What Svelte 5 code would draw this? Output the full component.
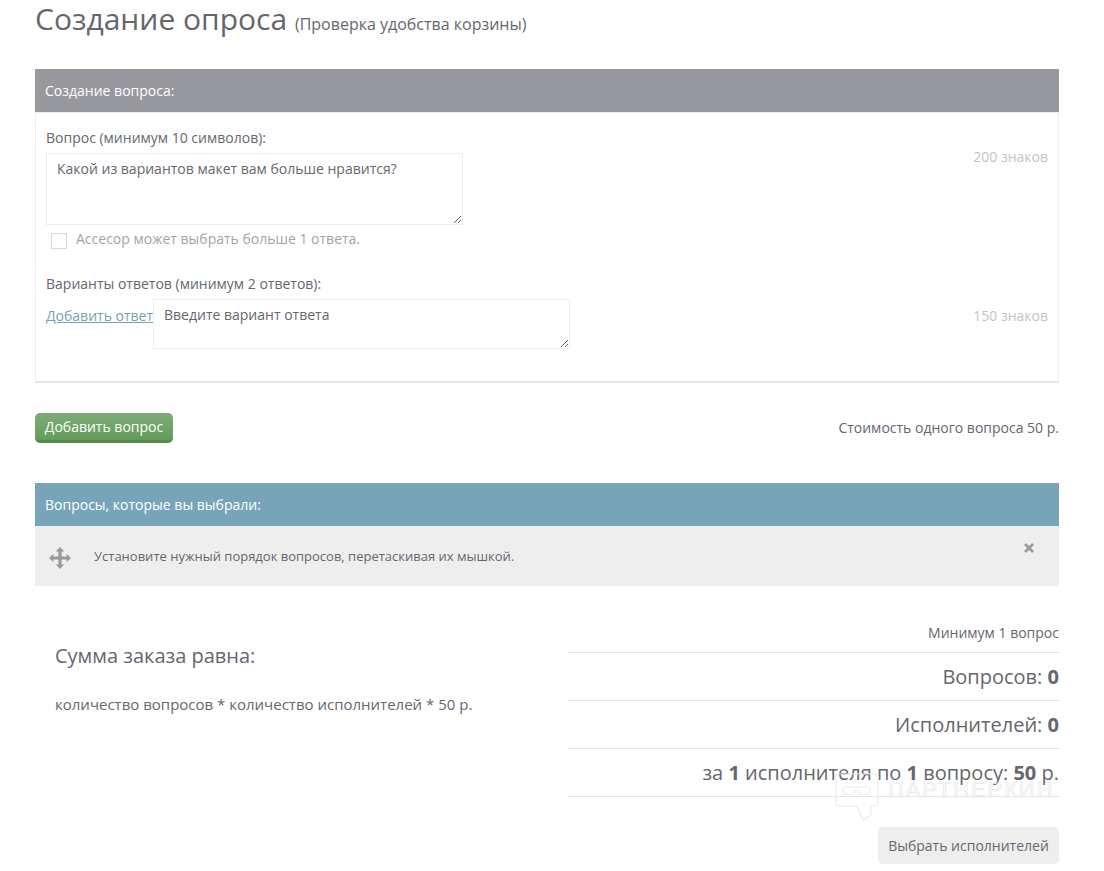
<script>
  let question = $state('Какой из вариантов макет вам больше нравится?');
</script>

<div class="page">
  <h1>Создание опроса <small>(Проверка удобства корзины)</small></h1>

  <section class="panel">
    <div class="head gray">Создание вопроса:</div>
    <div class="body">
      <div class="block q">
        <div class="col">
          <label for="q">Вопрос (минимум 10 символов):</label>
          <textarea id="q" class="ta-q" bind:value={question}></textarea>
          <div class="check"><span class="box"></span><span>Ассесор может выбрать больше 1 ответа.</span></div>
        </div>
        <span class="count c1">200 знаков</span>
      </div>
      <div class="block a">
        <div class="col">
          <label for="a">Варианты ответов (минимум 2 ответов):</label>
          <div class="answer">
            <a href="#add">Добавить ответ</a>
            <textarea id="a" class="ta-a" placeholder="Введите вариант ответа"></textarea>
          </div>
        </div>
        <span class="count c2">150 знаков</span>
      </div>
    </div>
  </section>

  <div class="actions">
    <button class="green">Добавить вопрос</button>
    <span>Стоимость одного вопроса 50 р.</span>
  </div>

  <section class="chosen">
    <div class="head blue">Вопросы, которые вы выбрали:</div>
    <div class="hint">
      <svg class="move" width="24" height="24" viewBox="0 0 24 24" aria-hidden="true">
        <path fill="#999" d="M12 1l4.2 4.4h-2.6v5h5V7.800L23 12l-4.400 4.200v-2.600h-5v5h2.600L12 23l-4.200-4.400h2.600v-5h-5v2.600L1 12l4.400-4.200v2.600h5v-5H7.800z"/>
      </svg>
      <span class="hint-text">Установите нужный порядок вопросов, перетаскивая их мышкой.</span>
      <svg class="close" width="10" height="10" viewBox="0 0 10 10" aria-hidden="true">
        <path d="M1 1l8 8M9 1l-8 8" stroke="#999" stroke-width="2.600" fill="none"/>
      </svg>
    </div>
  </section>

  <section class="summary">
    <div class="left">
      <h2>Сумма заказа равна:</h2>
      <p>количество вопросов * количество исполнителей * 50 р.</p>
    </div>
    <div class="right">
      <div class="min">Минимум 1 вопрос</div>
      <div class="row">Вопросов: <b>0</b></div>
      <div class="row">Исполнителей: <b>0</b></div>
      <div class="row">за <b>1</b> исполнителя по <b>1</b> вопросу: <b>50</b> р.</div>
      <div class="submit"><button class="plain">Выбрать исполнителей</button></div>
      <div class="mark" aria-hidden="true">
        <svg width="44" height="48" viewBox="0 0 44 48">
          <path d="M4 1h36q3 0 3 3v26q0 3-3 3h-4v9l-8 5-6-14H4q-3 0-3-3V4q0-3 3-3z" fill="none" stroke="#ececec" stroke-width="1.200"/>
          <path d="M9 14h24M9 14q-1 0-1 2v3q0 2 2 2h7q3 0 3-3v-1h3v1q0 3 3 3h7q2 0 2-2v-3q0-2-1-2" fill="none" stroke="#ececec" stroke-width="1.200"/>
        </svg>
        <span>ПАРТНЕРКИН</span>
      </div>
    </div>
  </section>
</div>

<style>
  :global(body) {
    margin: 0;
    background: #fff;
  }
  .page {
    box-sizing: border-box;
    width: 1104px;
    height: 871px;
    overflow: hidden;
    padding: 0 45px 0 35px;
    font-family: "Open Sans", "Noto Sans", sans-serif;
    font-size: 13px;
    color: #66666e;
  }
  h1 {
    margin: 0;
    height: 69px;
    font-size: 30px;
    font-weight: 400;
    line-height: 38px;
  }
  h1 small {
    font-size: 16px;
  }
  .head {
    box-sizing: border-box;
    height: 43px;
    padding-left: 10px;
    line-height: 43px;
    font-size: 14px;
    color: #fff;
  }
  .gray {
    background: #98989f;
  }
  .blue {
    background: #78a4ba;
  }
  .body {
    box-sizing: border-box;
    height: 271px;
    padding: 0 10px;
    border: 1px solid #eee;
    border-bottom-width: 2px;
    border-bottom-color: #e6e6e6;
  }
  .block {
    display: flex;
    justify-content: space-between;
  }
  .q {
    height: 146px;
    padding-top: 15px;
  }
  .col {
    display: flex;
    flex-direction: column;
  }
  label {
    display: block;
    font-size: 14px;
    line-height: 19px;
    margin-bottom: 6px;
  }
  textarea {
    box-sizing: border-box;
    display: block;
    margin: 0;
    padding: 5px 10px;
    border: 1px solid #eee;
    outline: none;
    font-family: inherit;
    font-size: 14px;
    line-height: 19px;
    color: #66666e;
    background: #fff;
  }
  textarea::placeholder {
    color: #66666e;
    opacity: 1;
  }
  .ta-q {
    width: 417px;
    height: 72px;
  }
  .ta-a {
    width: 417px;
    height: 50px;
  }
  .check {
    display: flex;
    align-items: center;
    gap: 9px;
    margin: 3px 0 0 5px;
    font-size: 14px;
    line-height: 19px;
    color: #a3a3a8;
  }
  .box {
    box-sizing: border-box;
    width: 16px;
    height: 16px;
    margin-top: 5px;
    border: 1px solid #d8d8d8;
  }
  .count {
    font-size: 14px;
    color: #c4c4c4;
  }
  .c1 {
    margin-top: 19px;
  }
  .c2 {
    margin-top: 32px;
  }
  .answer {
    display: flex;
    align-items: flex-start;
  }
  .answer a {
    width: 107px;
    flex: none;
    white-space: nowrap;
    overflow: hidden;
    font-size: 14px;
    line-height: 19px;
    margin-top: 7px;
    padding-bottom: 2px;
    color: #78a0b4;
    text-decoration: underline;
  }
  .actions {
    display: flex;
    justify-content: space-between;
    align-items: center;
    height: 30px;
    margin-top: 30px;
    margin-bottom: 40px;
  }
  .actions span {
    font-size: 14px;
    margin-top: -2px;
  }
  button {
    box-sizing: border-box;
    font-family: inherit;
    font-size: 14px;
    cursor: pointer;
  }
  .green {
    width: 138px;
    height: 30px;
    padding: 0;
    border: 0;
    border-bottom: 3px solid #55874f;
    border-radius: 5px;
    background: linear-gradient(#7dad76, #639b5a);
    color: #fff;
    line-height: 26px;
  }
  .hint {
    display: flex;
    align-items: center;
    height: 60px;
    background: #eee;
    position: relative;
  }
  .move {
    margin-left: 13px;
    margin-top: 3px;
  }
  .hint-text {
    margin-left: 22px;
    font-size: 13px;
  }
  .close {
    position: absolute;
    left: 989px;
    top: 17px;
  }
  .summary {
    display: flex;
    justify-content: space-between;
    margin-top: 32px;
  }
  .left {
    padding: 24px 0 0 20px;
  }
  h2 {
    margin: 0;
    font-size: 20px;
    font-weight: 400;
    line-height: 27px;
  }
  .left p {
    margin: 25px 0 0;
    font-size: 15px;
    line-height: 20px;
  }
  .right {
    position: relative;
    width: 492px;
    text-align: right;
  }
  .min {
    height: 35px;
    padding-top: 5px;
    box-sizing: border-box;
    font-size: 14px;
    line-height: 19px;
    border-bottom: 1px solid #e6e6e6;
  }
  .row {
    box-sizing: border-box;
    height: 48px;
    line-height: 47px;
    font-size: 20px;
    border-bottom: 1px solid #e6e6e6;
  }
  .submit {
    margin-top: 30px;
  }
  .plain {
    width: 181px;
    height: 37px;
    padding: 0;
    border: 0;
    border-radius: 5px;
    background: #eee;
    color: #66666e;
  }
  .mark {
    position: absolute;
    left: 268px;
    top: 155px;
    display: flex;
    align-items: flex-start;
    gap: 9px;
    pointer-events: none;
  }
  .mark span {
    font-family: "Liberation Sans", sans-serif;
    font-size: 22px;
    line-height: 16px;
    margin-top: 9px;
    letter-spacing: 1.9px;
    white-space: nowrap;
    color: transparent;
    -webkit-text-stroke: 0.7px #e6e6e6;
  }
</style>
